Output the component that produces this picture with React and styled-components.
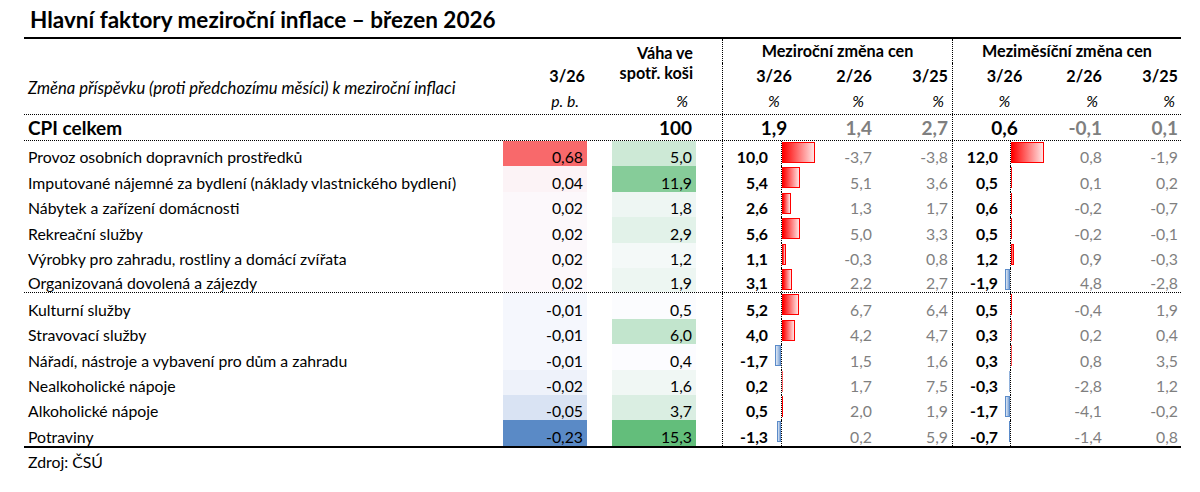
import React from 'react'
import styled, { createGlobalStyle } from 'styled-components'

const GlobalStyle = createGlobalStyle`
  html, body { margin: 0; padding: 0; background: #fff; }
  body { font-family: Lato, "Open Sans", sans-serif; color: #000; }
`

const COLS = '479px 84px 25px 84px 26px 48px 60px 44px 78px 47px 61px 44px 77px'

const rows = [
  ['Provoz osobních dopravních prostředků', 0.68, 5.0, 10.0, -3.7, -3.8, 12.0, 0.8, -1.9],
  ['Imputované nájemné za bydlení (náklady vlastnického bydlení)', 0.04, 11.9, 5.4, 5.1, 3.6, 0.5, 0.1, 0.2],
  ['Nábytek a zařízení domácnosti', 0.02, 1.8, 2.6, 1.3, 1.7, 0.6, -0.2, -0.7],
  ['Rekreační služby', 0.02, 2.9, 5.6, 5.0, 3.3, 0.5, -0.2, -0.1],
  ['Výrobky pro zahradu, rostliny a domácí zvířata', 0.02, 1.2, 1.1, -0.3, 0.8, 1.2, 0.9, -0.3],
  ['Organizovaná dovolená a zájezdy', 0.02, 1.9, 3.1, 2.2, 2.7, -1.9, 4.8, -2.8],
  ['Kulturní služby', -0.01, 0.5, 5.2, 6.7, 6.4, 0.5, -0.4, 1.9],
  ['Stravovací služby', -0.01, 6.0, 4.0, 4.2, 4.7, 0.3, 0.2, 0.4],
  ['Nářadí, nástroje a vybavení pro dům a zahradu', -0.01, 0.4, -1.7, 1.5, 1.6, 0.3, 0.8, 3.5],
  ['Nealkoholické nápoje', -0.02, 1.6, 0.2, 1.7, 7.5, -0.3, -2.8, 1.2],
  ['Alkoholické nápoje', -0.05, 3.7, 0.5, 2.0, 1.9, -1.7, -4.1, -0.2],
  ['Potraviny', -0.23, 15.3, -1.3, 0.2, 5.9, -0.7, -1.4, 0.8],
]

const fmt = (v, d = 1) => v.toFixed(d).replace('.', ',')

const mix = (a, b, t) => {
  const c = a.map((x, i) => Math.round(x + (b[i] - x) * t))
  return `rgb(${c.join(',')})`
}
const WHITE = [252, 252, 255]
const RED = [248, 105, 107]
const BLUE = [90, 138, 198]
const GREEN = [99, 190, 123]

const contribColor = v => (v >= 0 ? mix(WHITE, RED, v / 0.68) : mix(WHITE, BLUE, v / -0.23))
const weightColor = v => mix(WHITE, GREEN, (v - 0.4) / (15.3 - 0.4))

const Page = styled.div`
  width: 1157px;
  padding-left: 24px;
`

const Title = styled.h1`
  margin: 0;
  height: 39px;
  box-sizing: border-box;
  padding: 6px 0 0 6px;
  font-size: 22.5px;
  line-height: 27px;
  font-weight: 700;
  border-bottom: 2px solid #000;
`

const Header = styled.div`
  display: grid;
  grid-template-columns: ${COLS};
  grid-template-rows: 24px 26px 25px;
  border-bottom: 1px dotted #000;
  font-size: 16.2px;
  font-weight: 700;
`

const HeadCell = styled.div`
  grid-column: ${p => p.$col};
  grid-row: ${p => p.$row};
  text-align: ${p => p.$align || 'right'};
  padding-right: ${p => p.$pr || 0}px;
  line-height: ${p => p.$lh || 24}px;
  white-space: nowrap;
  ${p => p.$divider && 'border-left: 1px dotted #000;'}
  ${p => p.$italic && 'font-style: italic; font-weight: 400; font-size: 15.8px;'}
`

const WeightHead = styled(HeadCell)`
  padding-top: 4px;
  line-height: 20px;
`

const Note = styled.div`
  grid-column: 1;
  grid-row: 2 / 4;
  padding: 15px 0 0 4px;
  font-style: italic;
  font-weight: 400;
  font-size: 16.6px;
  line-height: 20px;
  white-space: nowrap;
`

const Row = styled.div`
  display: grid;
  grid-template-columns: ${COLS};
  height: ${p => (p.$total ? 26 : 25.4)}px;
  box-sizing: border-box;
  ${p => p.$sep && 'border-bottom: 1px dotted #000;'}
  font-size: ${p => (p.$total ? 19 : 15.8)}px;
  font-weight: ${p => (p.$total ? 700 : 400)};
  line-height: ${p => (p.$total ? 25 : 19)}px;
`

const Label = styled.div`
  padding-left: 4px;
  display: flex;
  align-items: flex-end;
  white-space: nowrap;
`

const Cell = styled.div`
  display: flex;
  align-items: flex-end;
  justify-content: ${p => (p.$center ? 'center' : 'flex-end')};
  grid-column: ${p => p.$col || 'auto'};
  padding-right: ${p => p.$pr || 0}px;
  color: ${p => (p.$muted ? '#7f7f7f' : '#000')};
  font-weight: ${p => (p.$bold ? 700 : 'inherit')};
  ${p => p.$divider && 'border-left: 1px dotted #000;'}
`

const BarWrap = styled.div`
  display: flex;
  align-items: stretch;
`

const NegZone = styled.div`
  width: ${p => p.$w}px;
  display: flex;
  justify-content: flex-end;
  align-items: flex-start;
  padding-top: 1px;
`

const PosZone = styled.div`
  flex: 1;
  display: flex;
  align-items: flex-start;
  padding-top: 1px;
  border-left: 1px dotted #000;
`

const Bar = styled.div`
  height: 21px;
  box-sizing: border-box;
  border: 1px solid ${p => (p.$neg ? '#5b8bc9' : '#ff0000')};
  background: ${p =>
    p.$neg
      ? 'linear-gradient(to left, #7ea3d4, #dfe9f6)'
      : 'linear-gradient(to right, #ff0000, #ffe4e4)'};
`

const Sliver = styled.div`
  height: 21px;
  width: 1px;
  background: ${p => (p.$neg ? '#5b8bc9' : '#ff0000')};
`

const DataBar = ({ value, max, neg }) => {
  const w = (Math.abs(value) / max) * 33
  const isNeg = value < 0
  const bar =
    w < 2 ? (
      <Sliver $neg={isNeg} style={{ opacity: Math.min(1, 0.25 + w * 0.5) }} />
    ) : (
      <Bar $neg={isNeg} style={{ width: w }} />
    )
  return (
    <BarWrap>
      <NegZone $w={neg}>{isNeg && bar}</NegZone>
      <PosZone>{!isNeg && bar}</PosZone>
    </BarWrap>
  )
}

const Footer = styled.div`
  border-top: 2px solid #000;
  padding: 3px 0 0 4px;
  font-size: 15.8px;
  line-height: 22px;
`

export default function App() {
  return (
    <>
      <GlobalStyle />
      <Page>
        <Title>Hlavní faktory meziroční inflace – březen 2026</Title>

        <Header>
          <WeightHead $col="4" $row="1 / 3" $pr={3}>
            Váha ve
            <br />
            spotř. koši
          </WeightHead>
          <HeadCell $col="6 / 10" $row="1" $align="center" $divider>
            Meziroční změna cen
          </HeadCell>
          <HeadCell $col="10 / 14" $row="1" $align="center" $divider>
            Meziměsíční změna cen
          </HeadCell>

          <HeadCell $col="2" $row="2" $pr={2} $lh={26}>3/26</HeadCell>
          <HeadCell $col="6 / 8" $row="2" $align="center" $pr={5} $lh={26} $divider>3/26</HeadCell>
          <HeadCell $col="8" $row="2" $pr={2} $lh={26}>2/26</HeadCell>
          <HeadCell $col="9" $row="2" $pr={4} $lh={26}>3/25</HeadCell>
          <HeadCell $col="10 / 12" $row="2" $align="center" $pr={4} $lh={26} $divider>3/26</HeadCell>
          <HeadCell $col="12" $row="2" $pr={2} $lh={26}>2/26</HeadCell>
          <HeadCell $col="13" $row="2" $pr={3} $lh={26}>3/25</HeadCell>

          <Note>Změna příspěvku (proti předchozímu měsíci) k meziroční inflaci</Note>

          <HeadCell $col="2" $row="3" $pr={8} $italic>p. b.</HeadCell>
          <HeadCell $col="4" $row="3" $pr={8} $italic>%</HeadCell>
          <HeadCell $col="6 / 8" $row="3" $align="center" $pr={5} $italic $divider>%</HeadCell>
          <HeadCell $col="8" $row="3" $pr={10} $italic>%</HeadCell>
          <HeadCell $col="9" $row="3" $pr={8} $italic>%</HeadCell>
          <HeadCell $col="10 / 12" $row="3" $align="center" $pr={4} $italic $divider>%</HeadCell>
          <HeadCell $col="12" $row="3" $pr={6} $italic>%</HeadCell>
          <HeadCell $col="13" $row="3" $pr={6} $italic>%</HeadCell>
        </Header>

        <Row $total $sep>
          <Label>CPI celkem</Label>
          <Cell $col="4" $pr={4}>100</Cell>
          <Cell $col="6 / 8" $center $pr={5} $divider>1,9</Cell>
          <Cell $muted $pr={2}>1,4</Cell>
          <Cell $muted $pr={4}>2,7</Cell>
          <Cell $col="10 / 12" $center $pr={4} $divider>0,6</Cell>
          <Cell $muted $pr={2}>-0,1</Cell>
          <Cell $muted $pr={3}>0,1</Cell>
        </Row>

        {rows.map(([name, c, w, a1, a2, a3, m1, m2, m3], i) => (
          <Row key={name} $sep={i === 5}>
            <Label>{name}</Label>
            <Cell $pr={4} style={{ background: contribColor(c) }}>{fmt(c, 2)}</Cell>
            <div />
            <Cell $pr={4} style={{ background: weightColor(w) }}>{fmt(w)}</Cell>
            <div />
            <Cell $divider $bold $pr={2}>{fmt(a1)}</Cell>
            <DataBar value={a1} max={10} neg={11} />
            <Cell $muted $pr={2}>{fmt(a2)}</Cell>
            <Cell $muted $pr={4}>{fmt(a3)}</Cell>
            <Cell $divider $bold $pr={1}>{fmt(m1)}</Cell>
            <DataBar value={m1} max={12} neg={11} />
            <Cell $muted $pr={2}>{fmt(m2)}</Cell>
            <Cell $muted $pr={3}>{fmt(m3)}</Cell>
          </Row>
        ))}

        <Footer>Zdroj: ČSÚ</Footer>
      </Page>
    </>
  )
}
